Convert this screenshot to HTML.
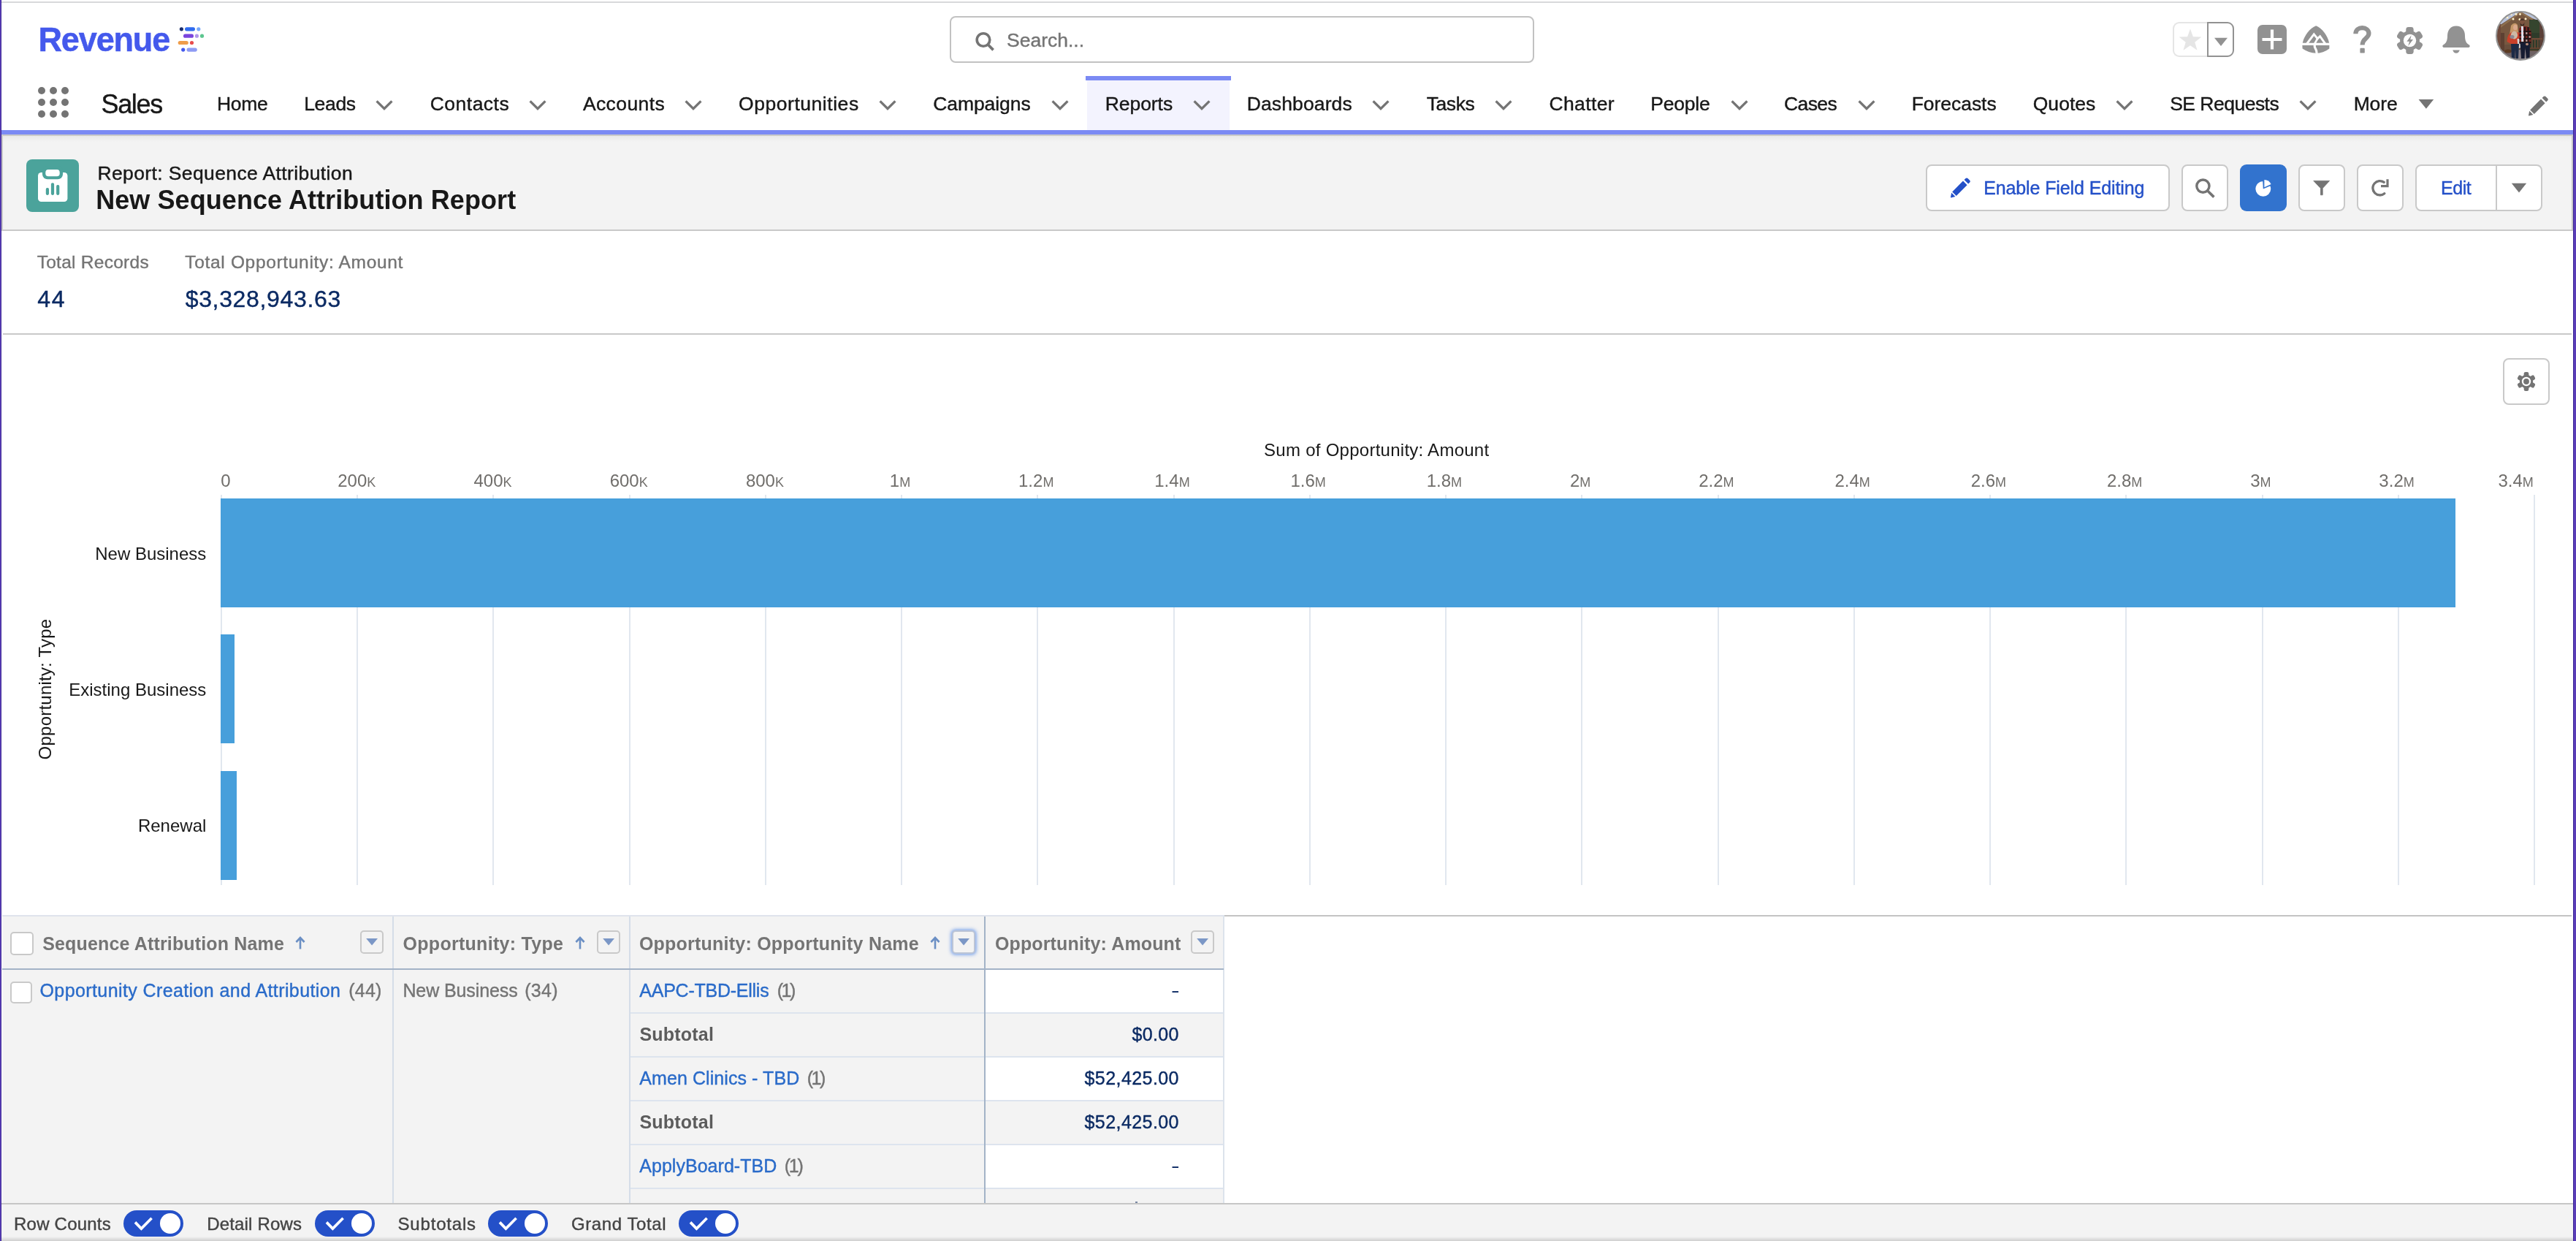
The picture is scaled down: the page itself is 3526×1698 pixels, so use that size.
<!DOCTYPE html>
<html lang="en"><head><meta charset="utf-8"><title>New Sequence Attribution Report</title>
<style>
html,body{margin:0;padding:0;background:#fff}
body{width:3526px;height:1698px;position:relative;overflow:hidden;font-family:"Liberation Sans",sans-serif}
#root{position:absolute;left:0;top:0;width:3526px;height:1698px;will-change:transform}
.b{position:absolute;display:block}
.t{position:absolute;display:block;white-space:nowrap;line-height:1;font-family:"Liberation Sans",sans-serif}
</style></head><body><div id="root">
<div class="b" style="left:0px;top:0px;width:3526px;height:1698px;background:#fff"></div>
<div class="b" style="left:2px;top:2px;width:3520px;height:2px;background:#d8d9db"></div>
<span class="t" style="left:52.50px;top:31.9px;font-size:45px;font-weight:bold;color:#4459ec;letter-spacing:-1.142px;transform:scaleY(1.03);transform-origin:0 38px;-webkit-text-stroke:0.5px #4459ec;">Revenue</span>
<svg class="b" style="left:0px;top:0px;" width="300" height="90" viewBox="0 0 300 90"><circle cx="248.4" cy="39.8" r="2.6" fill="#1b2f6e"/><rect x="253" y="37.199999999999996" width="14" height="5.2" rx="2.6" fill="#2f6bef"/><circle cx="271.8" cy="39.8" r="2.6" fill="#76a7fa"/><rect x="251" y="46.6" width="14" height="5.2" rx="2.6" fill="#7a44dd"/><circle cx="269.4" cy="49.2" r="2.6" fill="#b197ea"/><circle cx="276.5" cy="49.2" r="2.6" fill="#5cc68f"/><rect x="243.7" y="55.9" width="14.100000000000023" height="5.2" rx="2.6" fill="#ef9d4a"/><circle cx="262.5" cy="58.5" r="2.6" fill="#e84d4d"/><circle cx="250.7" cy="68.1" r="2.6" fill="#4459ec"/><rect x="255.5" y="65.5" width="14.300000000000011" height="5.2" rx="2.6" fill="#8e9bf4"/></svg>
<div class="b" style="left:1300px;top:22px;width:800px;height:64px;box-sizing:border-box;border:2px solid #c2c2c2;border-radius:8px;background:#fff"></div>
<svg class="b" style="left:1330px;top:40px;" width="36" height="34" viewBox="0 0 36 34"><circle cx="16" cy="14.5" r="8.8" fill="none" stroke="#747474" stroke-width="3.6"/><path d="M22.3 21 L29.6 28.4" stroke="#747474" stroke-width="3.8" stroke-linecap="butt"/></svg>
<span class="t" style="left:1378.10px;top:41.6px;font-size:26.5px;font-weight:normal;color:#747474;letter-spacing:-0.013px;-webkit-text-stroke:0.4px #747474;">Search...</span>
<div class="b" style="left:2974px;top:30px;width:48px;height:48px;box-sizing:border-box;border:2px solid #e5e5e5;border-right:none;border-radius:9px 0 0 9px;background:#fff"></div>
<div class="b" style="left:3021px;top:30px;width:37px;height:48px;box-sizing:border-box;border:2px solid #929292;border-radius:0 9px 9px 0;background:#fff"></div>
<svg class="b" style="left:2974px;top:30px;" width="48" height="48" viewBox="0 0 48 48"><path d="M24.00,9.40 L27.88,20.26 L39.41,20.59 L30.28,27.64 L33.52,38.71 L24.00,32.20 L14.48,38.71 L17.72,27.64 L8.59,20.59 L20.12,20.26Z" fill="#e5e5e5"/></svg>
<svg class="b" style="left:3021px;top:30px;" width="37" height="48" viewBox="0 0 37 48"><path d="M10 21.8 L28 21.8 L19 33 Z" fill="#929292"/></svg>
<svg class="b" style="left:3090px;top:34px;" width="40" height="40" viewBox="0 0 40 40"><rect x="0" y="0" width="40" height="40" rx="7" fill="#929292"/><path d="M20 6.5V33.5M6.5 20H33.5" stroke="#fff" stroke-width="4.2"/></svg>
<svg class="b" style="left:3151px;top:35px;" width="38" height="38" viewBox="0 0 38 38"><path d="M19.2 0.2 C27 3.5 35 13 37 23.4 L37.4 27.2 L37.4 31.4 C32 35.5 25.5 37.7 19 37.7 C12.5 37.7 6 35.5 0.6 31.6 L0.4 27.2 L0.85 23.4 C3 13 11 3.5 19.2 0.2Z" fill="#929292"/><path d="M-1 25.4 H39" stroke="#fff" stroke-width="3.1"/><path d="M6.6 24.9 L16.3 11.9 L21.2 17.9 L24.6 14.7 L31.8 24.9" fill="none" stroke="#fff" stroke-width="2.9" stroke-linejoin="miter"/><path d="M21.4 17.4 L17.4 24.6" stroke="#fff" stroke-width="2.7"/><path d="M17.6 26.4 C15.6 30.2 20.6 31.8 19.9 37.9" fill="none" stroke="#fff" stroke-width="3.2"/></svg>
<svg class="b" style="left:3221px;top:35px;" width="26" height="38" viewBox="0 0 26 38"><path d="M3.4 11.2 C3.4 5.6 7.6 3.2 12.4 3.2 C17.6 3.2 21.4 6.2 21.4 10.8 C21.4 17.6 12.6 17.2 12.6 26.4" fill="none" stroke="#929292" stroke-width="6.2"/><rect x="9.4" y="30.8" width="6.4" height="6.8" rx="1.2" fill="#929292"/></svg>
<svg class="b" style="left:3280.5px;top:36.5px;" width="35" height="37" viewBox="0 0 35 37"><circle cx="17.5" cy="18.5" r="13.4" fill="#929292"/><rect x="12.3" y="0" width="10.4" height="14" rx="3.4" fill="#929292" transform="rotate(0 17.5 18.5)"/><rect x="12.3" y="0" width="10.4" height="14" rx="3.4" fill="#929292" transform="rotate(60 17.5 18.5)"/><rect x="12.3" y="0" width="10.4" height="14" rx="3.4" fill="#929292" transform="rotate(120 17.5 18.5)"/><rect x="12.3" y="0" width="10.4" height="14" rx="3.4" fill="#929292" transform="rotate(180 17.5 18.5)"/><rect x="12.3" y="0" width="10.4" height="14" rx="3.4" fill="#929292" transform="rotate(240 17.5 18.5)"/><rect x="12.3" y="0" width="10.4" height="14" rx="3.4" fill="#929292" transform="rotate(300 17.5 18.5)"/><circle cx="17.5" cy="18.5" r="8.7" fill="#fff"/><path d="M19.6 11.2 L13.4 19.8 L17 19.8 L15.2 26 L22 17 L18.2 17 Z" fill="#929292"/></svg>
<svg class="b" style="left:3343px;top:35px;" width="38" height="38" viewBox="0 0 38 38"><path d="M19 0.4 C27 0.4 31 6.5 31 14 C31 21 33 24.5 36.6 26.2 C38.2 27 38 30 36 30 L2 30 C0 30 -0.2 27 1.4 26.2 C5 24.5 7 21 7 14 C7 6.5 11 0.4 19 0.4Z" fill="#929292"/><path d="M14.2 33.6 H23.8 C23 36.4 21.2 37.8 19 37.8 C16.8 37.8 15 36.4 14.2 33.6Z" fill="#929292"/></svg>
<svg class="b" style="left:3416px;top:15px;" width="68" height="68" viewBox="0 0 68 68"><defs><clipPath id="avc"><circle cx="34" cy="34" r="32.6"/></clipPath><filter id="avb" x="-10%" y="-10%" width="120%" height="120%"><feGaussianBlur stdDeviation="0.55"/></filter></defs><g clip-path="url(#avc)"><g filter="url(#avb)"><rect x="-4" y="-4" width="76" height="76" fill="#6a4f3e"/><path d="M-4 -4 H72 V18 L50 10 L34 1 L8 18 L-4 22Z" fill="#b9c3da"/><path d="M7 21 L34 2.5 L50 12 V46 H7Z" fill="#77593f"/><path d="M6 22 L34 2 L51 12" fill="none" stroke="#8e6f4f" stroke-width="2.4"/><rect x="46" y="12" width="16" height="42" fill="#2f3a2c"/><path d="M46 14 Q54 8 62 18 V30 H46Z" fill="#36452f"/><rect x="60" y="16" width="10" height="44" fill="#5a4038"/><rect x="-2" y="18" width="9" height="44" fill="#6e4a3b"/><rect x="7" y="30" width="5" height="28" fill="#5d3f30"/><rect x="44" y="37" width="20" height="2.4" fill="#6f4c37"/><rect x="44" y="50" width="20" height="2.4" fill="#5e3f2e"/><g fill="#6a4936"><rect x="49" y="38" width="1.6" height="13"/><rect x="53" y="38" width="1.6" height="13"/><rect x="57" y="38" width="1.6" height="13"/></g><rect x="-2" y="55" width="72" height="16" fill="#6e6264"/><rect x="30" y="53" width="12" height="16" fill="#8a8288"/><ellipse cx="17" cy="55" rx="5" ry="2.6" fill="#5b3a24"/><g fill="#fff2cc"><circle cx="16" cy="9" r="1.5"/><circle cx="24" cy="11" r="1.5"/><circle cx="28" cy="4.5" r="1.4"/><circle cx="33.5" cy="4.5" r="1.4"/><circle cx="33" cy="11.5" r="1.5"/><circle cx="41" cy="10.8" r="1.5"/><circle cx="21.5" cy="5" r="1.2"/></g><path d="M21 20 Q26 14 30 19 L31 30 L19 33Z" fill="#c59767"/><ellipse cx="27" cy="22.5" rx="3" ry="3.8" fill="#dba98c"/><path d="M15.5 42 Q16 30 24 28 L33 30 Q35 38 33 45 L21 45 Z" fill="#c9412c"/><ellipse cx="25.5" cy="33" rx="4.6" ry="5.4" fill="#cdb9a4"/><ellipse cx="22.5" cy="35.5" rx="3" ry="2.4" fill="#8b8791"/><path d="M29.5 38 H33.6 L34.6 50 L30.6 51.5Z" fill="#d9d7d6"/><path d="M21 45 H32 L31 65 H27.5 L27 52 L26 65 H22Z" fill="#1f2a45"/><ellipse cx="36.5" cy="14.6" rx="3.3" ry="4.6" fill="#7d523f"/><path d="M33.2 13 Q36.5 7.5 39.8 13Z" fill="#4a342b"/><path d="M33.6 16 Q36.5 22 39.4 16 L39 20 H34Z" fill="#3a2a24"/><path d="M32 24 Q37 18.5 45 22 Q49 26 49 34 L48 45 H32.5Z" fill="#7a2622"/><g fill="#241416"><rect x="39" y="22" width="2.2" height="23"/><rect x="43.4" y="22" width="2.2" height="23"/><rect x="32.5" y="27" width="16" height="2"/><rect x="32.5" y="32" width="16" height="2"/><rect x="32.5" y="37" width="16" height="2"/><rect x="32.5" y="42" width="16" height="2"/></g><g fill="#b7a4a2"><rect x="41.2" y="29.2" width="2.2" height="2.6"/><rect x="45.6" y="34.2" width="2" height="2.6"/><rect x="41.2" y="39.2" width="2.2" height="2.6"/><rect x="36.9" y="34.2" width="2" height="2.6"/></g><path d="M35 21 H37.8 L38.2 42 H35.2Z" fill="#dfe3ef"/><path d="M33.5 43 H47 L46.5 65 H42 L40.4 50 L39.5 65 H35Z" fill="#191f33"/><ellipse cx="43" cy="45.5" rx="2" ry="1.8" fill="#b98c78"/></g></g><circle cx="34" cy="34" r="33" fill="none" stroke="#929292" stroke-width="2"/></svg>
<div class="b" style="left:52px;top:119px;width:10px;height:10px;border-radius:50%;background:#747474"></div>
<div class="b" style="left:52px;top:135px;width:10px;height:10px;border-radius:50%;background:#747474"></div>
<div class="b" style="left:52px;top:151px;width:10px;height:10px;border-radius:50%;background:#747474"></div>
<div class="b" style="left:68px;top:119px;width:10px;height:10px;border-radius:50%;background:#747474"></div>
<div class="b" style="left:68px;top:135px;width:10px;height:10px;border-radius:50%;background:#747474"></div>
<div class="b" style="left:68px;top:151px;width:10px;height:10px;border-radius:50%;background:#747474"></div>
<div class="b" style="left:84px;top:119px;width:10px;height:10px;border-radius:50%;background:#747474"></div>
<div class="b" style="left:84px;top:135px;width:10px;height:10px;border-radius:50%;background:#747474"></div>
<div class="b" style="left:84px;top:151px;width:10px;height:10px;border-radius:50%;background:#747474"></div>
<span class="t" style="left:138.40px;top:124.5px;font-size:36px;font-weight:normal;color:#181818;letter-spacing:-1.275px;-webkit-text-stroke:0.4px #181818;">Sales</span>
<div class="b" style="left:1488px;top:110px;width:195px;height:68px;background:#f3f3fe"></div>
<div class="b" style="left:1486px;top:104px;width:199px;height:6px;background:#7b8af4"></div>
<span class="t" style="left:297.00px;top:129.0px;font-size:26.5px;font-weight:normal;color:#181818;letter-spacing:-0.285px;-webkit-text-stroke:0.4px #181818;">Home</span>
<span class="t" style="left:416.20px;top:129.0px;font-size:26.5px;font-weight:normal;color:#181818;letter-spacing:-0.328px;-webkit-text-stroke:0.4px #181818;">Leads</span>
<svg class="b" style="left:514px;top:136px;" width="24" height="17" viewBox="0 0 24 17"><path d="M1.6 2.4 L12 12.6 L22.4 2.4" fill="none" stroke="#747474" stroke-width="3.3"/></svg>
<span class="t" style="left:588.70px;top:129.0px;font-size:26.5px;font-weight:normal;color:#181818;letter-spacing:0.494px;-webkit-text-stroke:0.4px #181818;">Contacts</span>
<svg class="b" style="left:724px;top:136px;" width="24" height="17" viewBox="0 0 24 17"><path d="M1.6 2.4 L12 12.6 L22.4 2.4" fill="none" stroke="#747474" stroke-width="3.3"/></svg>
<span class="t" style="left:797.90px;top:129.0px;font-size:26.5px;font-weight:normal;color:#181818;letter-spacing:0.393px;-webkit-text-stroke:0.4px #181818;">Accounts</span>
<svg class="b" style="left:937px;top:136px;" width="24" height="17" viewBox="0 0 24 17"><path d="M1.6 2.4 L12 12.6 L22.4 2.4" fill="none" stroke="#747474" stroke-width="3.3"/></svg>
<span class="t" style="left:1011.10px;top:129.0px;font-size:26.5px;font-weight:normal;color:#181818;letter-spacing:0.535px;-webkit-text-stroke:0.4px #181818;">Opportunities</span>
<svg class="b" style="left:1203px;top:136px;" width="24" height="17" viewBox="0 0 24 17"><path d="M1.6 2.4 L12 12.6 L22.4 2.4" fill="none" stroke="#747474" stroke-width="3.3"/></svg>
<span class="t" style="left:1277.20px;top:129.0px;font-size:26.5px;font-weight:normal;color:#181818;letter-spacing:-0.074px;-webkit-text-stroke:0.4px #181818;">Campaigns</span>
<svg class="b" style="left:1439px;top:136px;" width="24" height="17" viewBox="0 0 24 17"><path d="M1.6 2.4 L12 12.6 L22.4 2.4" fill="none" stroke="#747474" stroke-width="3.3"/></svg>
<span class="t" style="left:1512.70px;top:129.0px;font-size:26.5px;font-weight:normal;color:#181818;letter-spacing:-0.058px;-webkit-text-stroke:0.4px #181818;">Reports</span>
<svg class="b" style="left:1633px;top:136px;" width="24" height="17" viewBox="0 0 24 17"><path d="M1.6 2.4 L12 12.6 L22.4 2.4" fill="none" stroke="#747474" stroke-width="3.3"/></svg>
<span class="t" style="left:1706.70px;top:129.0px;font-size:26.5px;font-weight:normal;color:#181818;letter-spacing:0.129px;-webkit-text-stroke:0.4px #181818;">Dashboards</span>
<svg class="b" style="left:1878px;top:136px;" width="24" height="17" viewBox="0 0 24 17"><path d="M1.6 2.4 L12 12.6 L22.4 2.4" fill="none" stroke="#747474" stroke-width="3.3"/></svg>
<span class="t" style="left:1952.70px;top:129.0px;font-size:26.5px;font-weight:normal;color:#181818;letter-spacing:-0.427px;-webkit-text-stroke:0.4px #181818;">Tasks</span>
<svg class="b" style="left:2046px;top:136px;" width="24" height="17" viewBox="0 0 24 17"><path d="M1.6 2.4 L12 12.6 L22.4 2.4" fill="none" stroke="#747474" stroke-width="3.3"/></svg>
<span class="t" style="left:2120.40px;top:129.0px;font-size:26.5px;font-weight:normal;color:#181818;letter-spacing:0.397px;-webkit-text-stroke:0.4px #181818;">Chatter</span>
<span class="t" style="left:2259.20px;top:129.0px;font-size:26.5px;font-weight:normal;color:#181818;letter-spacing:-0.209px;-webkit-text-stroke:0.4px #181818;">People</span>
<svg class="b" style="left:2369px;top:136px;" width="24" height="17" viewBox="0 0 24 17"><path d="M1.6 2.4 L12 12.6 L22.4 2.4" fill="none" stroke="#747474" stroke-width="3.3"/></svg>
<span class="t" style="left:2442.10px;top:129.0px;font-size:26.5px;font-weight:normal;color:#181818;letter-spacing:-0.632px;-webkit-text-stroke:0.4px #181818;">Cases</span>
<svg class="b" style="left:2543px;top:136px;" width="24" height="17" viewBox="0 0 24 17"><path d="M1.6 2.4 L12 12.6 L22.4 2.4" fill="none" stroke="#747474" stroke-width="3.3"/></svg>
<span class="t" style="left:2616.70px;top:129.0px;font-size:26.5px;font-weight:normal;color:#181818;letter-spacing:-0.042px;-webkit-text-stroke:0.4px #181818;">Forecasts</span>
<span class="t" style="left:2782.70px;top:129.0px;font-size:26.5px;font-weight:normal;color:#181818;letter-spacing:0.047px;-webkit-text-stroke:0.4px #181818;">Quotes</span>
<svg class="b" style="left:2896px;top:136px;" width="24" height="17" viewBox="0 0 24 17"><path d="M1.6 2.4 L12 12.6 L22.4 2.4" fill="none" stroke="#747474" stroke-width="3.3"/></svg>
<span class="t" style="left:2970.20px;top:129.0px;font-size:26.5px;font-weight:normal;color:#181818;letter-spacing:-0.513px;-webkit-text-stroke:0.4px #181818;">SE Requests</span>
<svg class="b" style="left:3147px;top:136px;" width="24" height="17" viewBox="0 0 24 17"><path d="M1.6 2.4 L12 12.6 L22.4 2.4" fill="none" stroke="#747474" stroke-width="3.3"/></svg>
<span class="t" style="left:3221.70px;top:129.0px;font-size:26.5px;font-weight:normal;color:#181818;letter-spacing:-0.140px;-webkit-text-stroke:0.4px #181818;">More</span>
<svg class="b" style="left:3310px;top:135px;" width="22" height="15" viewBox="0 0 22 15"><path d="M0.6 1 H21.2 L10.9 13.8Z" fill="#747474"/></svg>
<svg class="b" style="left:3461px;top:131px;" width="28" height="28" viewBox="0 0 28 28"><path d="M2.2 19.4 L17 4.6 L22.6 10.2 L7.8 25 Z M18.6 3 L20.6 1 C21.4 0.2 22.6 0.2 23.4 1 L26.2 3.8 C27 4.6 27 5.8 26.2 6.6 L24.2 8.6 Z M1.2 20.8 L6.4 26 L0.6 27.4 C0.2 27.5 -0.1 27.2 0 26.8 Z" fill="#747474"/></svg>
<div class="b" style="left:2px;top:178px;width:3520px;height:6px;background:#7b8af4"></div>
<div class="b" style="left:2px;top:184px;width:3520px;height:132px;box-sizing:border-box;border:2px solid #c9c9c9;border-bottom:2px solid #c9c9c9;background:linear-gradient(#e9e9e9,#f3f3f3 8px,#f3f3f3)"></div>
<div class="b" style="left:36px;top:218px;width:72px;height:72px;border-radius:8px;background:#4ba39b"></div>
<svg class="b" style="left:36px;top:218px;" width="72" height="72" viewBox="0 0 72 72"><rect x="16" y="18" width="40.4" height="40" rx="4.5" fill="#fff"/><rect x="22" y="9" width="28" height="18.2" rx="7" fill="#4ba39b"/><rect x="26.3" y="14.1" width="19.4" height="9.2" rx="3.8" fill="#fff"/><rect x="26.8" y="39.1" width="4.2" height="9.8" rx="1.8" fill="#4ba39b"/><rect x="33.9" y="32.2" width="4.2" height="16.7" rx="1.8" fill="#4ba39b"/><rect x="41.1" y="35.1" width="4.2" height="13.8" rx="1.8" fill="#4ba39b"/></svg>
<span class="t" style="left:133.40px;top:224.4px;font-size:26.5px;font-weight:normal;color:#181818;letter-spacing:0.389px;-webkit-text-stroke:0.4px #181818;">Report: Sequence Attribution</span>
<span class="t" style="left:131.20px;top:255.5px;font-size:36px;font-weight:bold;color:#181818;letter-spacing:0.075px;">New Sequence Attribution Report</span>
<div class="b" style="left:2636px;top:225px;width:334px;height:64px;box-sizing:border-box;border:2px solid #c9c9c9;border-radius:8px;background:#fff"></div>
<svg class="b" style="left:2670px;top:243px;" width="28" height="28" viewBox="0 0 28 28"><path d="M2.2 19.4 L17 4.6 L22.6 10.2 L7.8 25 Z M18.6 3 L20.6 1 C21.4 0.2 22.6 0.2 23.4 1 L26.2 3.8 C27 4.6 27 5.8 26.2 6.6 L24.2 8.6 Z M1.2 20.8 L6.4 26 L0.6 27.4 C0.2 27.5 -0.1 27.2 0 26.8 Z" fill="#2450c8"/></svg>
<span class="t" style="left:2715.20px;top:244.5px;font-size:25px;font-weight:normal;color:#2450c8;letter-spacing:-0.114px;-webkit-text-stroke:0.4px #2450c8;">Enable Field Editing</span>
<div class="b" style="left:2986px;top:225px;width:64px;height:64px;box-sizing:border-box;border:2px solid #c9c9c9;border-radius:8px;background:#fff"></div>
<svg class="b" style="left:3003px;top:242px;" width="32" height="32" viewBox="0 0 32 32"><circle cx="12.4" cy="12.6" r="8.6" fill="none" stroke="#747474" stroke-width="3.4"/><path d="M18.6 19 L27.4 27.6" stroke="#747474" stroke-width="3.6"/></svg>
<div class="b" style="left:3066px;top:225px;width:64px;height:64px;border-radius:9px;background:#3273ce"></div>
<svg class="b" style="left:3087.4px;top:245px;" width="24" height="26" viewBox="0 0 24 26"><circle cx="10.8" cy="13.4" r="10.4" fill="#fff"/><path d="M10.8 13.4 L10 0 L24 0 L24 8 Z" fill="#3273ce"/><path d="M12.4 11.2 L12.4 1 A 10.6 10.6 0 0 1 21.6 7 Z" fill="#fff"/></svg>
<div class="b" style="left:3146px;top:225px;width:64px;height:64px;box-sizing:border-box;border:2px solid #c9c9c9;border-radius:8px;background:#fff"></div>
<svg class="b" style="left:3166px;top:246px;" width="24" height="22" viewBox="0 0 24 22"><path d="M0.8 1.4 H22.6 L13.2 11.6 V20.8 H10.4 V11.6 Z" fill="#747474" stroke="#747474" stroke-width="0.8" stroke-linejoin="round"/></svg>
<div class="b" style="left:3226px;top:225px;width:64px;height:64px;box-sizing:border-box;border:2px solid #c9c9c9;border-radius:8px;background:#fff"></div>
<svg class="b" style="left:3245px;top:244px;" width="26" height="26" viewBox="0 0 26 26"><path d="M18.2 5.4 A9.7 9.7 0 1 0 18.8 20.7" fill="none" stroke="#747474" stroke-width="3.3" stroke-linecap="round"/><path d="M23 1.2 V10.7 H14" fill="none" stroke="#747474" stroke-width="3.2"/></svg>
<div class="b" style="left:3306px;top:225px;width:174px;height:64px;box-sizing:border-box;border:2px solid #c9c9c9;border-radius:8px;background:#fff"></div>
<div class="b" style="left:3416px;top:227px;width:2px;height:60px;background:#c9c9c9"></div>
<span class="t" style="left:3341.10px;top:244.5px;font-size:25px;font-weight:normal;color:#2450c8;letter-spacing:-0.508px;-webkit-text-stroke:0.4px #2450c8;">Edit</span>
<svg class="b" style="left:3437px;top:250px;" width="22" height="15" viewBox="0 0 22 15"><path d="M0.8 0.8 H21.2 L11 13.4Z" fill="#747474"/></svg>
<div class="b" style="left:4px;top:456px;width:3516px;height:2px;background:#c9c9c9"></div>
<span class="t" style="left:50.70px;top:346.6px;font-size:24.5px;font-weight:normal;color:#747474;letter-spacing:0.265px;-webkit-text-stroke:0.4px #747474;">Total Records</span>
<span class="t" style="left:253.30px;top:346.6px;font-size:24.5px;font-weight:normal;color:#747474;letter-spacing:0.672px;-webkit-text-stroke:0.4px #747474;">Total Opportunity: Amount</span>
<span class="t" style="left:51.20px;top:392.9px;font-size:32px;font-weight:normal;color:#0b2a63;letter-spacing:1.680px;-webkit-text-stroke:0.4px #0b2a63;">44</span>
<span class="t" style="left:253.70px;top:392.9px;font-size:32px;font-weight:normal;color:#0b2a63;letter-spacing:0.655px;-webkit-text-stroke:0.4px #0b2a63;">$3,328,943.63</span>
<div class="b" style="left:3426px;top:490px;width:64px;height:64px;box-sizing:border-box;border:2px solid #c9c9c9;border-radius:8px;background:#fff"></div>
<svg class="b" style="left:3445px;top:509px;" width="26" height="26" viewBox="0 0 26 26"><circle cx="13" cy="13" r="9.2" fill="#747474"/><rect x="9.7" y="0" width="6.6" height="9" rx="2.2" fill="#747474" transform="rotate(0 13 13)"/><rect x="9.7" y="0" width="6.6" height="9" rx="2.2" fill="#747474" transform="rotate(60 13 13)"/><rect x="9.7" y="0" width="6.6" height="9" rx="2.2" fill="#747474" transform="rotate(120 13 13)"/><rect x="9.7" y="0" width="6.6" height="9" rx="2.2" fill="#747474" transform="rotate(180 13 13)"/><rect x="9.7" y="0" width="6.6" height="9" rx="2.2" fill="#747474" transform="rotate(240 13 13)"/><rect x="9.7" y="0" width="6.6" height="9" rx="2.2" fill="#747474" transform="rotate(300 13 13)"/><circle cx="13" cy="13" r="6.2" fill="#fff"/><circle cx="13" cy="13" r="3.9" fill="#747474"/></svg>
<span class="t" style="left:1730.10px;top:604.0px;font-size:24px;font-weight:normal;color:#181818;letter-spacing:0.262px;">Sum of Opportunity: Amount</span>
<div class="b" style="left:302px;top:677px;width:2px;height:534px;background:#e1e7ef"></div>
<span class="t" style="left:302.20px;top:646px;font-size:24px;color:#706e6b">0</span>
<div class="b" style="left:488px;top:677px;width:2px;height:534px;background:#e1e7ef"></div>
<span class="t" style="left:462.21px;top:646px;font-size:24px;color:#706e6b">200<span style="font-size:18px">K</span></span>
<div class="b" style="left:674px;top:677px;width:2px;height:534px;background:#e1e7ef"></div>
<span class="t" style="left:648.45px;top:646px;font-size:24px;color:#706e6b">400<span style="font-size:18px">K</span></span>
<div class="b" style="left:861px;top:677px;width:2px;height:534px;background:#e1e7ef"></div>
<span class="t" style="left:834.68px;top:646px;font-size:24px;color:#706e6b">600<span style="font-size:18px">K</span></span>
<div class="b" style="left:1047px;top:677px;width:2px;height:534px;background:#e1e7ef"></div>
<span class="t" style="left:1020.92px;top:646px;font-size:24px;color:#706e6b">800<span style="font-size:18px">K</span></span>
<div class="b" style="left:1233px;top:677px;width:2px;height:534px;background:#e1e7ef"></div>
<span class="t" style="left:1217.80px;top:646px;font-size:24px;color:#706e6b">1<span style="font-size:18px">M</span></span>
<div class="b" style="left:1419px;top:677px;width:2px;height:534px;background:#e1e7ef"></div>
<span class="t" style="left:1394.02px;top:646px;font-size:24px;color:#706e6b">1.2<span style="font-size:18px">M</span></span>
<div class="b" style="left:1606px;top:677px;width:2px;height:534px;background:#e1e7ef"></div>
<span class="t" style="left:1580.25px;top:646px;font-size:24px;color:#706e6b">1.4<span style="font-size:18px">M</span></span>
<div class="b" style="left:1792px;top:677px;width:2px;height:534px;background:#e1e7ef"></div>
<span class="t" style="left:1766.49px;top:646px;font-size:24px;color:#706e6b">1.6<span style="font-size:18px">M</span></span>
<div class="b" style="left:1978px;top:677px;width:2px;height:534px;background:#e1e7ef"></div>
<span class="t" style="left:1952.72px;top:646px;font-size:24px;color:#706e6b">1.8<span style="font-size:18px">M</span></span>
<div class="b" style="left:2164px;top:677px;width:2px;height:534px;background:#e1e7ef"></div>
<span class="t" style="left:2148.98px;top:646px;font-size:24px;color:#706e6b">2<span style="font-size:18px">M</span></span>
<div class="b" style="left:2351px;top:677px;width:2px;height:534px;background:#e1e7ef"></div>
<span class="t" style="left:2325.19px;top:646px;font-size:24px;color:#706e6b">2.2<span style="font-size:18px">M</span></span>
<div class="b" style="left:2537px;top:677px;width:2px;height:534px;background:#e1e7ef"></div>
<span class="t" style="left:2511.43px;top:646px;font-size:24px;color:#706e6b">2.4<span style="font-size:18px">M</span></span>
<div class="b" style="left:2723px;top:677px;width:2px;height:534px;background:#e1e7ef"></div>
<span class="t" style="left:2697.66px;top:646px;font-size:24px;color:#706e6b">2.6<span style="font-size:18px">M</span></span>
<div class="b" style="left:2909px;top:677px;width:2px;height:534px;background:#e1e7ef"></div>
<span class="t" style="left:2883.90px;top:646px;font-size:24px;color:#706e6b">2.8<span style="font-size:18px">M</span></span>
<div class="b" style="left:3096px;top:677px;width:2px;height:534px;background:#e1e7ef"></div>
<span class="t" style="left:3080.15px;top:646px;font-size:24px;color:#706e6b">3<span style="font-size:18px">M</span></span>
<div class="b" style="left:3282px;top:677px;width:2px;height:534px;background:#e1e7ef"></div>
<span class="t" style="left:3256.37px;top:646px;font-size:24px;color:#706e6b">3.2<span style="font-size:18px">M</span></span>
<div class="b" style="left:3468px;top:677px;width:2px;height:534px;background:#e1e7ef"></div>
<span class="t" style="left:3419.41px;top:646px;font-size:24px;color:#706e6b">3.4<span style="font-size:18px">M</span></span>
<div class="b" style="left:302px;top:682px;width:3059px;height:149px;background:#479fdb"></div>
<div class="b" style="left:302px;top:868px;width:19px;height:149px;background:#479fdb"></div>
<div class="b" style="left:302px;top:1055px;width:22px;height:149px;background:#479fdb"></div>
<span class="t" style="left:130.26px;top:745.7px;font-size:24px;font-weight:normal;color:#181818;letter-spacing:0.000px;">New Business</span>
<span class="t" style="left:94.26px;top:932.1px;font-size:24px;font-weight:normal;color:#181818;letter-spacing:0.000px;">Existing Business</span>
<span class="t" style="left:188.94px;top:1117.7px;font-size:24px;font-weight:normal;color:#181818;letter-spacing:0.000px;">Renewal</span>
<span class="t" style="left:62.4px;top:943px;font-size:24px;color:#181818;letter-spacing:0.22px;transform:translate(-50%,-50%) rotate(-90deg);transform-origin:center">Opportunity: Type</span>
<div class="b" style="left:3px;top:1252px;width:1673px;height:394px;background:#f3f3f3"></div>
<div class="b" style="left:3px;top:1252px;width:1673px;height:2px;background:#dfe3ec"></div>
<div class="b" style="left:1676px;top:1252px;width:1844px;height:2px;background:#c4c4c4"></div>
<div class="b" style="left:1349px;top:1327px;width:326px;height:58px;background:#fff"></div>
<div class="b" style="left:1349px;top:1447px;width:326px;height:58px;background:#fff"></div>
<div class="b" style="left:1349px;top:1567px;width:326px;height:58px;background:#fff"></div>
<div class="b" style="left:863px;top:1385px;width:812px;height:2px;background:#dde4ee"></div>
<div class="b" style="left:863px;top:1445px;width:812px;height:2px;background:#dde4ee"></div>
<div class="b" style="left:863px;top:1505px;width:812px;height:2px;background:#dde4ee"></div>
<div class="b" style="left:863px;top:1565px;width:812px;height:2px;background:#dde4ee"></div>
<div class="b" style="left:863px;top:1625px;width:812px;height:2px;background:#dde4ee"></div>
<div class="b" style="left:537px;top:1254px;width:2px;height:392px;background:#d5dde8"></div>
<div class="b" style="left:861px;top:1254px;width:2px;height:392px;background:#d5dde8"></div>
<div class="b" style="left:1347px;top:1254px;width:2px;height:392px;background:#a3b3c7"></div>
<div class="b" style="left:1674px;top:1252px;width:2px;height:394px;background:#dce3ec"></div>
<div class="b" style="left:3px;top:1325px;width:1672px;height:2px;background:#a3b3c7"></div>
<div class="b" style="left:14px;top:1275px;width:32px;height:32px;box-sizing:border-box;border:2px solid #c9c9c9;border-radius:5px;background:#fff"></div>
<div class="b" style="left:14px;top:1343px;width:30px;height:30px;box-sizing:border-box;border:2px solid #c9c9c9;border-radius:5px;background:#fff"></div>
<span class="t" style="left:58.20px;top:1278.8px;font-size:25px;font-weight:bold;color:#747474;letter-spacing:0.159px;">Sequence Attribution Name</span>
<span class="t" style="left:551.60px;top:1278.8px;font-size:25px;font-weight:bold;color:#747474;letter-spacing:0.278px;">Opportunity: Type</span>
<span class="t" style="left:874.90px;top:1278.8px;font-size:25px;font-weight:bold;color:#747474;letter-spacing:0.229px;">Opportunity: Opportunity Name</span>
<span class="t" style="left:1361.90px;top:1278.8px;font-size:25px;font-weight:bold;color:#747474;letter-spacing:0.147px;">Opportunity: Amount</span>
<svg class="b" style="left:404px;top:1281px;" width="14" height="19" viewBox="0 0 14 19"><path d="M7 17.4 V2.4 M1.4 8 L7 2 L12.6 8" fill="none" stroke="#6b8fc4" stroke-width="2.6"/></svg>
<svg class="b" style="left:787px;top:1281px;" width="14" height="19" viewBox="0 0 14 19"><path d="M7 17.4 V2.4 M1.4 8 L7 2 L12.6 8" fill="none" stroke="#6b8fc4" stroke-width="2.6"/></svg>
<svg class="b" style="left:1272.6px;top:1281px;" width="14" height="19" viewBox="0 0 14 19"><path d="M7 17.4 V2.4 M1.4 8 L7 2 L12.6 8" fill="none" stroke="#6b8fc4" stroke-width="2.6"/></svg>
<div class="b" style="left:493px;top:1273px;width:32px;height:32px;box-sizing:border-box;border:2px solid #c9c9c9;border-radius:5px;background:#f3f3f3"></div>
<svg class="b" style="left:493px;top:1273px;" width="32" height="32" viewBox="0 0 32 32"><path d="M8.2 11 H24 L16.1 20.6Z" fill="#7b97c6"/></svg>
<div class="b" style="left:817px;top:1273px;width:32px;height:32px;box-sizing:border-box;border:2px solid #c9c9c9;border-radius:5px;background:#f3f3f3"></div>
<svg class="b" style="left:817px;top:1273px;" width="32" height="32" viewBox="0 0 32 32"><path d="M8.2 11 H24 L16.1 20.6Z" fill="#7b97c6"/></svg>
<div class="b" style="left:1303px;top:1273px;width:32px;height:32px;box-sizing:border-box;border:2px solid #c9c9c9;border-radius:5px;background:#f3f3f3;box-shadow:0 0 5px 0.5px rgba(79,134,232,.85);border-color:#bcc5d6"></div>
<svg class="b" style="left:1303px;top:1273px;" width="32" height="32" viewBox="0 0 32 32"><path d="M8.2 11 H24 L16.1 20.6Z" fill="#7b97c6"/></svg>
<div class="b" style="left:1630px;top:1273px;width:32px;height:32px;box-sizing:border-box;border:2px solid #c9c9c9;border-radius:5px;background:#f3f3f3"></div>
<svg class="b" style="left:1630px;top:1273px;" width="32" height="32" viewBox="0 0 32 32"><path d="M8.2 11 H24 L16.1 20.6Z" fill="#7b97c6"/></svg>
<span class="t" style="left:54.50px;top:1342.8px;font-size:25px;font-weight:normal;color:#2a6bc9;letter-spacing:0.400px;-webkit-text-stroke:0.4px #2a6bc9;">Opportunity Creation and Attribution</span>
<span class="t" style="left:477.20px;top:1342.8px;font-size:25px;font-weight:normal;color:#747474;letter-spacing:0.267px;-webkit-text-stroke:0.4px #747474;">(44)</span>
<span class="t" style="left:551.40px;top:1342.8px;font-size:25px;font-weight:normal;color:#747474;letter-spacing:-0.098px;-webkit-text-stroke:0.4px #747474;">New Business</span>
<span class="t" style="left:718.20px;top:1342.8px;font-size:25px;font-weight:normal;color:#747474;letter-spacing:0.333px;-webkit-text-stroke:0.4px #747474;">(34)</span>
<span class="t" style="left:875.30px;top:1342.8px;font-size:25px;font-weight:normal;color:#2a6bc9;letter-spacing:-0.248px;-webkit-text-stroke:0.4px #2a6bc9;">AAPC-TBD-Ellis</span>
<span class="t" style="left:1063.70px;top:1342.8px;font-size:25px;font-weight:normal;color:#747474;letter-spacing:-2.450px;-webkit-text-stroke:0.4px #747474;">(1)</span>
<span class="t" style="left:875.50px;top:1402.8px;font-size:25px;font-weight:bold;color:#5c5c5c;letter-spacing:0.200px;">Subtotal</span>
<span class="t" style="left:875.30px;top:1462.8px;font-size:25px;font-weight:normal;color:#2a6bc9;letter-spacing:0.075px;-webkit-text-stroke:0.4px #2a6bc9;">Amen Clinics - TBD</span>
<span class="t" style="left:1104.70px;top:1462.8px;font-size:25px;font-weight:normal;color:#747474;letter-spacing:-2.400px;-webkit-text-stroke:0.4px #747474;">(1)</span>
<span class="t" style="left:875.50px;top:1522.8px;font-size:25px;font-weight:bold;color:#5c5c5c;letter-spacing:0.200px;">Subtotal</span>
<span class="t" style="left:875.30px;top:1582.8px;font-size:25px;font-weight:normal;color:#2a6bc9;letter-spacing:0.029px;-webkit-text-stroke:0.4px #2a6bc9;">ApplyBoard-TBD</span>
<span class="t" style="left:1073.70px;top:1582.8px;font-size:25px;font-weight:normal;color:#747474;letter-spacing:-2.250px;-webkit-text-stroke:0.4px #747474;">(1)</span>
<span class="t" style="left:1602.50px;top:1343.3px;font-size:24px;font-weight:normal;color:#0b2a63;letter-spacing:0.000px;transform:scaleX(1.45);transform-origin:0 0;">-</span>
<span class="t" style="left:1549.50px;top:1402.8px;font-size:25px;font-weight:normal;color:#0b2a63;letter-spacing:0.344px;-webkit-text-stroke:0.4px #0b2a63;">$0.00</span>
<span class="t" style="left:1484.50px;top:1462.8px;font-size:25px;font-weight:normal;color:#0b2a63;letter-spacing:0.431px;-webkit-text-stroke:0.4px #0b2a63;">$52,425.00</span>
<span class="t" style="left:1484.50px;top:1522.8px;font-size:25px;font-weight:normal;color:#0b2a63;letter-spacing:0.431px;-webkit-text-stroke:0.4px #0b2a63;">$52,425.00</span>
<span class="t" style="left:1602.50px;top:1583.3px;font-size:24px;font-weight:normal;color:#0b2a63;letter-spacing:0.000px;transform:scaleX(1.45);transform-origin:0 0;">-</span>
<div class="b" style="left:1554px;top:1644px;width:3px;height:2px;background:#7a88a3"></div>
<div class="b" style="left:2px;top:1646px;width:3520px;height:52px;background:linear-gradient(#f3f3f3,#f3f3f3 46px,#cfcfcf)"></div>
<div class="b" style="left:2px;top:1646px;width:3520px;height:2px;background:#c6c6c6"></div>
<span class="t" style="left:19.00px;top:1662.7px;font-size:24px;font-weight:normal;color:#444444;letter-spacing:0.224px;-webkit-text-stroke:0.4px #444444;">Row Counts</span>
<div class="b" style="left:169px;top:1656px;width:82px;height:36px;border-radius:18px;background:#2450c8"></div>
<div class="b" style="left:219px;top:1660px;width:28px;height:28px;border-radius:50%;background:#fff"></div>
<svg class="b" style="left:182px;top:1664px;" width="28" height="22" viewBox="0 0 28 22"><path d="M3 8.4 L11.4 17 L25.6 2.8" fill="none" stroke="#fff" stroke-width="3.7"/></svg>
<span class="t" style="left:283.20px;top:1662.7px;font-size:24px;font-weight:normal;color:#444444;letter-spacing:0.176px;-webkit-text-stroke:0.4px #444444;">Detail Rows</span>
<div class="b" style="left:431px;top:1656px;width:82px;height:36px;border-radius:18px;background:#2450c8"></div>
<div class="b" style="left:481px;top:1660px;width:28px;height:28px;border-radius:50%;background:#fff"></div>
<svg class="b" style="left:444px;top:1664px;" width="28" height="22" viewBox="0 0 28 22"><path d="M3 8.4 L11.4 17 L25.6 2.8" fill="none" stroke="#fff" stroke-width="3.7"/></svg>
<span class="t" style="left:544.50px;top:1662.7px;font-size:24px;font-weight:normal;color:#444444;letter-spacing:0.815px;-webkit-text-stroke:0.4px #444444;">Subtotals</span>
<div class="b" style="left:668px;top:1656px;width:82px;height:36px;border-radius:18px;background:#2450c8"></div>
<div class="b" style="left:718px;top:1660px;width:28px;height:28px;border-radius:50%;background:#fff"></div>
<svg class="b" style="left:681px;top:1664px;" width="28" height="22" viewBox="0 0 28 22"><path d="M3 8.4 L11.4 17 L25.6 2.8" fill="none" stroke="#fff" stroke-width="3.7"/></svg>
<span class="t" style="left:781.90px;top:1662.7px;font-size:24px;font-weight:normal;color:#444444;letter-spacing:0.600px;-webkit-text-stroke:0.4px #444444;">Grand Total</span>
<div class="b" style="left:929px;top:1656px;width:82px;height:36px;border-radius:18px;background:#2450c8"></div>
<div class="b" style="left:979px;top:1660px;width:28px;height:28px;border-radius:50%;background:#fff"></div>
<svg class="b" style="left:942px;top:1664px;" width="28" height="22" viewBox="0 0 28 22"><path d="M3 8.4 L11.4 17 L25.6 2.8" fill="none" stroke="#fff" stroke-width="3.7"/></svg>
<div class="b" style="left:0px;top:0px;width:1px;height:1698px;background:#5a3db8"></div>
<div class="b" style="left:1px;top:0px;width:1px;height:1698px;background:#3f2a96"></div>
<div class="b" style="left:3522px;top:0px;width:1px;height:1698px;background:#3f2a96"></div>
<div class="b" style="left:3523px;top:0px;width:3px;height:1698px;background:#5a3db8"></div>
</div></body></html>
